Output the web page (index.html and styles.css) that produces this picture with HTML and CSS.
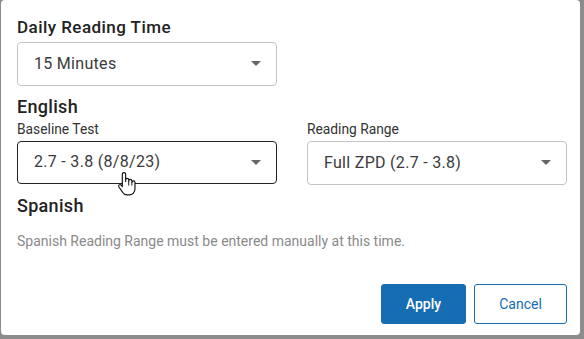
FILE: index.html
```html
<!DOCTYPE html>
<html>
<head>
<meta charset="utf-8">
<link rel="stylesheet" href="styles.css">
</head>
<body>
<div class="dialog">
  <h2 class="title">Daily Reading Time</h2>
  <div class="select">
    <span>15 Minutes</span><span class="arrow"></span>
  </div>

  <h3 class="section">English</h3>
  <div class="grid">
    <div class="field">
      <label class="label">Baseline Test</label>
      <div class="select hover">
        <span>2.7 - 3.8 (8/8/23)</span><span class="arrow"></span>
        <svg class="cursor" width="23" height="27" viewBox="0 0 22 26">
          <path d="M6 13 V3.2 a1.6 1.6 0 0 1 3.2 0 V10 V8.6 a1.5 1.5 0 0 1 3 0 V10.4 V9.6 a1.5 1.5 0 0 1 3 0 V11 a1.5 1.5 0 0 1 3 0 V17 c0 3.4 -2.3 6 -5.6 6 H10.6 c-2.2 0 -3.4 -1 -4.4 -2.6 L2.6 15.2 a1.4 1.4 0 0 1 2.2 -1.7 L6 15 Z" fill="#fff" stroke="#111" stroke-width="1.1" stroke-linejoin="round"/>
          <path d="M12.2 10.4 V14 M15.2 11 V14" stroke="#111" stroke-width="0.9" fill="none"/>
        </svg>
      </div>
    </div>
    <div class="field">
      <label class="label">Reading Range</label>
      <div class="select">
        <span>Full ZPD (2.7 - 3.8)</span><span class="arrow"></span>
      </div>
    </div>
  </div>

  <h3 class="section">Spanish</h3>
  <p class="note">Spanish Reading Range must be entered manually at this time.</p>

  <div class="actions">
    <button class="btn primary">Apply</button>
    <button class="btn secondary">Cancel</button>
  </div>
</div>
</body>
</html>
```

FILE: styles.css
```css
html, body {
  margin: 0;
  padding: 0;
  background: #8c8c8c;
  width: 584px;
  height: 339px;
  overflow: hidden;
}

body {
  font-family: Roboto, "Liberation Sans", Arial, sans-serif;
}

.dialog {
  box-sizing: border-box;
  margin-left: 1px;
  width: 579px;
  height: 335px;
  background: #fff;
  border-radius: 4px;
  padding: 17px 13px 0 16px;
  display: flex;
  flex-direction: column;
}

.title {
  margin: 0 0 5px 0;
  font-size: 17px;
  line-height: 20px;
  letter-spacing: 0.45px;
  font-weight: 500;
  color: #222;
}

.section {
  margin: 10px 0 3px 0;
  font-size: 18px;
  line-height: 22px;
  letter-spacing: 0.3px;
  font-weight: 500;
  color: #222;
}

.select {
  position: relative;
  box-sizing: border-box;
  width: 260px;
  height: 44px;
  border: 1px solid #c4c4c4;
  border-radius: 4px;
  display: flex;
  align-items: center;
  justify-content: space-between;
  padding: 0 15px 2px 16px;
  font-size: 16px;
  letter-spacing: 0.3px;
  color: #3a3a3a;
}

.select.hover {
  border-color: #222;
  height: 43px;
}

.arrow {
  width: 0;
  height: 0;
  margin-top: 1px;
  border-left: 5px solid transparent;
  border-right: 5px solid transparent;
  border-top: 5px solid #666;
}

.grid {
  display: grid;
  grid-template-columns: 260px 260px;
  column-gap: 30px;
}

.field {
  display: flex;
  flex-direction: column;
}

.label {
  font-size: 13.8px;
  line-height: 16px;
  color: #333;
  margin-bottom: 4px;
}

.note {
  margin: 13px 0 0 0;
  font-size: 14px;
  line-height: 16px;
  color: #8a8a8a;
}

.actions {
  margin-top: 35px;
  display: flex;
  justify-content: flex-end;
  gap: 8px;
}

.btn {
  box-sizing: border-box;
  height: 40px;
  border-radius: 3px;
  font-family: Roboto, "Liberation Sans", Arial, sans-serif;
  font-size: 14px;
  padding: 0;
}

.primary {
  width: 85px;
  background: #166db3;
  border: 1px solid #166db3;
  color: #fff;
  font-weight: 500;
}

.secondary {
  width: 93px;
  background: #fff;
  border: 1px solid #166db3;
  color: #166db3;
}

.cursor {
  position: absolute;
  left: 98px;
  top: 29px;
}
```
